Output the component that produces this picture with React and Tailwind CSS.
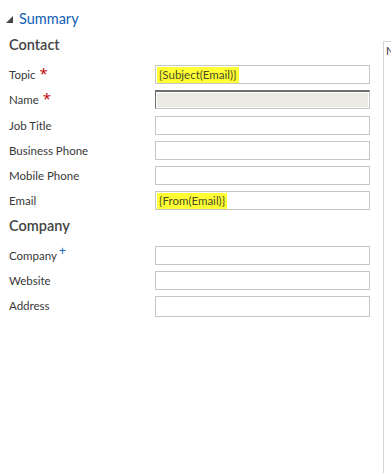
import React from "react";

const font = { fontFamily: 'Lato, "Open Sans", sans-serif' };
const sym = { fontFamily: '"Open Sans", "Noto Sans", sans-serif' };

function Field({ label, req, rec, value, locked, tall, extra }) {
  return (
    <div className={`flex h-[25px] items-center ${extra || ""}`}>
      <div className="w-[146px] text-[11.5px] text-[#383838] leading-none flex items-start">
        <span>{label}</span>
        {req && <span style={sym} className="ml-[4px] text-[#c00000] text-[15px] leading-none -mt-[3px]">*</span>}
        {rec && <span style={sym} className="ml-[2px] text-[#1160b7] text-[12px] leading-none -mt-[5px]">+</span>}
      </div>
      {locked ? (
        <div className="w-[215px] h-[19px] border-t-2 border-l border-r border-b border-t-[#6d6d6d] border-l-[#6d6d6d] border-r-[#c6c6c6] border-b-[#c6c6c6] p-[1px] bg-white">
          <div className="h-full w-full bg-[#ebeae4]" />
        </div>
      ) : (
        <div className={`w-[215px] ${tall ? "h-[21px] self-start mt-[3px]" : "h-[19px]"} border border-[#c6c6c6] bg-white flex items-center pl-[1px]`}>
          {value && (
            <span className="bg-[#ffff33] text-[#4b4b2a] text-[11.5px] leading-[15px] h-[16px] px-[2px]">{value}</span>
          )}
        </div>
      )}
    </div>
  );
}

export default function App() {
  return (
    <div className="w-[391px] h-[473px] bg-white flex overflow-hidden" style={font}>
      <div className="w-[383px] pl-[9px] flex flex-col">
        <div className="h-[20px] mt-[9px] flex items-center -ml-[3px]">
          <svg width="7" height="7" viewBox="0 0 7 7" className="mr-[6px] mt-[1px]">
            <polygon points="7,0 7,7 0,7" fill="#444" />
          </svg>
          <span className="text-[14.5px] text-[#1160b7] leading-[20px]">Summary</span>
        </div>
        <div className="h-[20px] mt-[6px] text-[14.5px] font-semibold text-[#444] leading-[20px]">Contact</div>
        <div className="mt-[7px] flex flex-col">
          <Field label="Topic" req value="{Subject(Email)}" />
          <Field label="Name" req locked />
          <Field label="Job Title" extra="mt-[1px]" />
          <Field label="Business Phone" />
          <Field label="Mobile Phone" />
          <Field label="Email" value="{From(Email)}" />
        </div>
        <div className="h-[20px] mt-[3px] text-[14.5px] font-semibold text-[#444] leading-[20px]">Company</div>
        <div className="mt-[7px] flex flex-col">
          <Field label="Company" rec />
          <Field label="Website" />
          <Field label="Address" tall />
        </div>
      </div>
      <div className="flex-1 mt-[41px] border-l border-t border-[#d6d6d6] pl-[2px] pt-[3px] overflow-hidden text-[11px] leading-none text-[#333]">
        N
      </div>
    </div>
  );
}
